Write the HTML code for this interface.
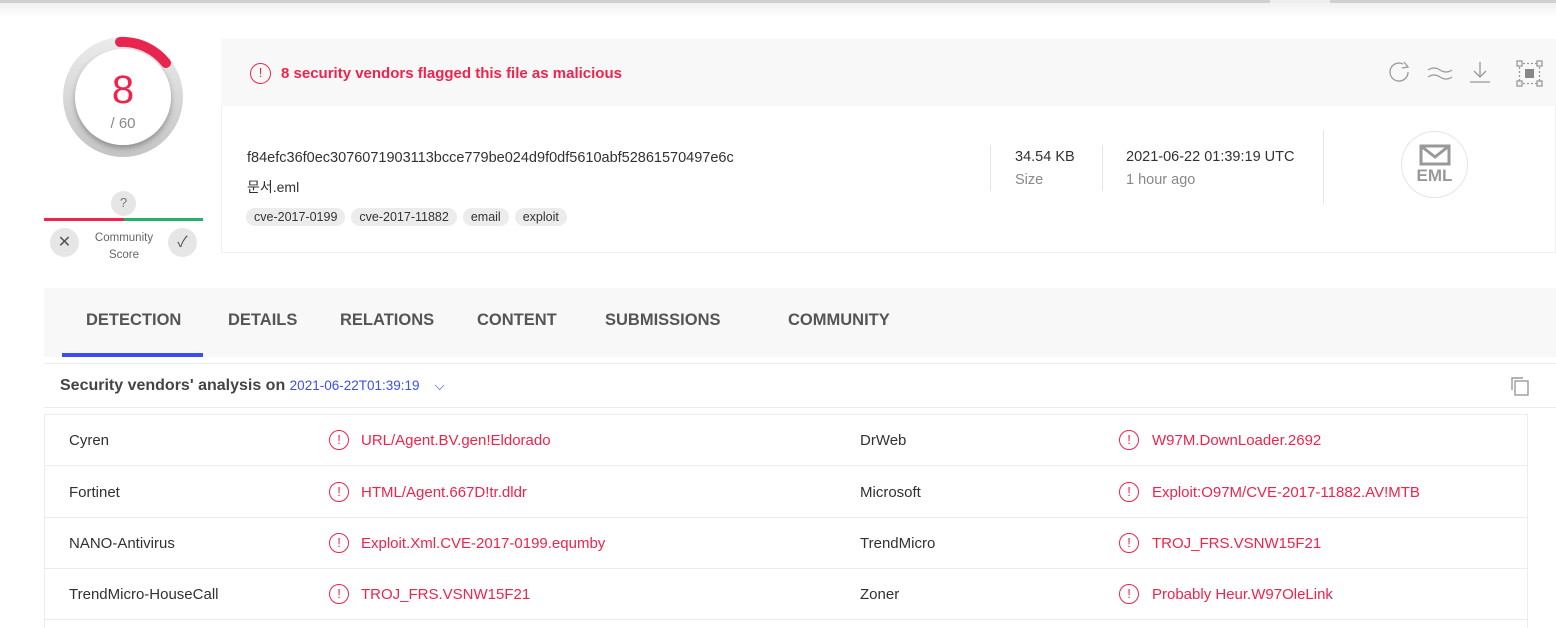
<!DOCTYPE html>
<html><head><meta charset="utf-8"><style>
*{box-sizing:border-box;margin:0;padding:0}
body{width:1556px;height:628px;overflow:hidden;background:#fff;font-family:"Liberation Sans","Noto Sans CJK KR",sans-serif;color:#313131;position:relative}
.abs{position:absolute}
.red{color:#f0234b}
.tag{display:inline-block;background:#ececec;border-radius:10px;padding:2px 8px;font-size:12.5px;color:#333;margin-right:6px}
.tab{position:absolute;top:311px;font-size:16.5px;font-weight:bold;color:#555}
.row{position:absolute;left:44px;width:1484px;height:52px;border-bottom:1px solid #ececec;font-size:15px}
.row span{position:absolute;top:18px}
.ic{width:20px;height:20px;border:1.5px solid #f0234b;border-radius:50%;color:#f0234b;font-size:13px;text-align:center;line-height:17px;top:16px!important}
</style></head><body>
<div class="abs" style="left:0;top:0;width:1556px;height:3px;background:#d0d0d0"></div>
<div class="abs" style="left:0;top:3px;width:1556px;height:14px;background:linear-gradient(#f0f0f0,#fff)"></div>
<div class="abs" style="left:1269px;top:0;width:62px;height:3px;border-left:1px solid #ccc;border-right:1px solid #ccc;background:#eee"></div>

<!-- gauge -->
<svg class="abs" style="left:53px;top:27px" width="140" height="140">
<defs><linearGradient id="g" x1="0" y1="0" x2="0" y2="1"><stop offset="0" stop-color="#ececec"/><stop offset="1" stop-color="#c4c4c4"/></linearGradient>
<filter id="s" x="-30%" y="-30%" width="160%" height="160%"><feDropShadow dx="0" dy="3" stdDeviation="3" flood-color="#000" flood-opacity=".3"/></filter></defs>
<circle cx="70" cy="70" r="60" fill="url(#g)"/>
<circle cx="70" cy="70" r="48" fill="#fff" filter="url(#s)"/>
<path d="M67 15 A55 55 0 0 1 113 36" stroke="#e8254e" stroke-width="10" fill="none" stroke-linecap="round"/>
</svg>
<div class="abs red" style="left:83px;top:68px;width:80px;text-align:center;font-size:40px">8</div>
<div class="abs" style="left:83px;top:115px;width:80px;text-align:center;font-size:15px;color:#888">/ 60</div>
<div class="abs" style="left:111px;top:191px;width:25px;height:25px;border-radius:50%;background:#e6e6e6;text-align:center;font-size:13px;line-height:24px;color:#777">?</div>
<div class="abs" style="left:44px;top:218px;width:80px;height:3px;background:#f0234b"></div>
<div class="abs" style="left:124px;top:218px;width:79px;height:3px;background:#25b06f"></div>
<div class="abs" style="left:50px;top:228px;width:29px;height:29px;border-radius:50%;background:#e6e6e6;text-align:center;line-height:29px;color:#555;font-size:16px">✕</div>
<div class="abs" style="left:168px;top:228px;width:29px;height:29px;border-radius:50%;background:#e6e6e6;text-align:center;line-height:29px;color:#555;font-size:15px">✓</div>
<div class="abs" style="left:84px;top:230px;width:80px;text-align:center;font-size:11.5px;color:#666;line-height:17px">Community<br>Score</div>

<!-- banner -->
<div class="abs" style="left:221px;top:39px;width:1335px;height:67px;background:#f8f8f8"></div>
<div class="abs ic" style="left:250px;top:63px!important;width:21px;height:21px;line-height:18px;position:absolute">!</div>
<div class="abs red" style="left:281px;top:65px;font-size:15px;font-weight:bold">8 security vendors flagged this file as malicious</div>
<svg class="abs" style="left:1386px;top:58px" width="160" height="32" fill="none" stroke="#999" stroke-width="1.3">
<path d="M22 14 A9 9 0 1 1 17 6" /><path d="M18 4 l4 5 l-6 1"/>
<path d="M42 12 q6 -4 12 0 t12 0 M42 19 q6 -4 12 0 t12 0"/>
<path d="M94 4 v15 M88 13 l6 6 l6 -6 M84 24 h20"/>
<rect x="131" y="3" width="5" height="5"/><rect x="151" y="3" width="5" height="5"/><rect x="131" y="23" width="5" height="5"/><rect x="151" y="23" width="5" height="5"/>
<rect x="139" y="11" width="9" height="9" fill="#888" stroke="none"/>
<path d="M137 5.5 h14 M137 25.5 h14 M133.5 9 v14 M153.5 9 v14" stroke-dasharray="2 2"/>
</svg>

<!-- info box -->
<div class="abs" style="left:221px;top:106px;width:1335px;height:147px;border:1px solid #f0f0f0;border-top:none"></div>
<div class="abs" style="left:247px;top:150px;font-size:14.5px">f84efc36f0ec3076071903113bcce779be024d9f0df5610abf52861570497e6c</div>
<div class="abs" style="left:247px;top:177px;font-size:14px">문서.eml</div>
<div class="abs" style="left:246px;top:208px"><span class="tag">cve-2017-0199</span><span class="tag">cve-2017-11882</span><span class="tag">email</span><span class="tag">exploit</span></div>
<div class="abs" style="left:990px;top:145px;width:1px;height:46px;background:#e5e5e5"></div>
<div class="abs" style="left:1015px;top:149px;font-size:14.5px">34.54 KB</div>
<div class="abs" style="left:1015px;top:172px;font-size:14.5px;color:#888">Size</div>
<div class="abs" style="left:1102px;top:145px;width:1px;height:46px;background:#e5e5e5"></div>
<div class="abs" style="left:1126px;top:149px;font-size:14.5px">2021-06-22 01:39:19 UTC</div>
<div class="abs" style="left:1126px;top:172px;font-size:14.5px;color:#888">1 hour ago</div>
<div class="abs" style="left:1323px;top:130px;width:1px;height:74px;background:#e5e5e5"></div>
<div class="abs" style="left:1401px;top:131px;width:67px;height:67px;border:1px solid #e5e5e5;border-radius:50%"></div>
<svg class="abs" style="left:1419px;top:144px" width="32" height="24" fill="none" stroke="#999" stroke-width="3"><rect x="2" y="2" width="28" height="18"/><path d="M2 2 l14 11 l14 -11"/></svg>
<div class="abs" style="left:1401px;top:166px;width:67px;text-align:center;font-weight:bold;font-size:17px;color:#999">EML</div>

<!-- tabs -->
<div class="abs" style="left:44px;top:288px;width:1512px;height:69px;background:#f8f8f8"></div>
<div class="tab" style="left:86px">DETECTION</div>
<div class="tab" style="left:228px">DETAILS</div>
<div class="tab" style="left:340px">RELATIONS</div>
<div class="tab" style="left:477px">CONTENT</div>
<div class="tab" style="left:605px">SUBMISSIONS</div>
<div class="tab" style="left:788px">COMMUNITY</div>
<div class="abs" style="left:62px;top:353px;width:141px;height:4px;background:#3c4ef0"></div>

<div class="abs" style="left:44px;top:363px;width:1512px;height:45px;border-top:1px solid #ececec;border-bottom:1px solid #ececec"></div>
<div class="abs" style="left:60px;top:377px;font-size:16px;font-weight:bold;color:#444">Security vendors' analysis on <span style="font-weight:normal;font-size:13.5px;color:#3c4ef0">2021-06-22T01:39:19 &nbsp;&nbsp;&nbsp;⌵</span></div>
<svg class="abs" style="left:1510px;top:376px" width="22" height="22" fill="none" stroke="#999" stroke-width="1.4"><path d="M2 14 V2 H13"/><rect x="5" y="5" width="13" height="14"/></svg>

<!-- table -->
<div class="abs" style="left:44px;top:414px;width:1484px;height:214px;border-left:1px solid #ececec;border-right:1px solid #ececec;border-top:1px solid #ececec"></div>
<div class="row" style="top:414px"><span style="left:25px">Cyren</span><span class="ic" style="left:285px">!</span><span class="red" style="left:317px">URL/Agent.BV.gen!Eldorado</span><span style="left:816px">DrWeb</span><span class="ic" style="left:1075px">!</span><span class="red" style="left:1108px">W97M.DownLoader.2692</span></div>
<div class="row" style="top:466px"><span style="left:25px">Fortinet</span><span class="ic" style="left:285px">!</span><span class="red" style="left:317px">HTML/Agent.667D!tr.dldr</span><span style="left:816px">Microsoft</span><span class="ic" style="left:1075px">!</span><span class="red" style="left:1108px">Exploit:O97M/CVE-2017-11882.AV!MTB</span></div>
<div class="row" style="top:517px"><span style="left:25px">NANO-Antivirus</span><span class="ic" style="left:285px">!</span><span class="red" style="left:317px">Exploit.Xml.CVE-2017-0199.equmby</span><span style="left:816px">TrendMicro</span><span class="ic" style="left:1075px">!</span><span class="red" style="left:1108px">TROJ_FRS.VSNW15F21</span></div>
<div class="row" style="top:568px"><span style="left:25px">TrendMicro-HouseCall</span><span class="ic" style="left:285px">!</span><span class="red" style="left:317px">TROJ_FRS.VSNW15F21</span><span style="left:816px">Zoner</span><span class="ic" style="left:1075px">!</span><span class="red" style="left:1108px">Probably Heur.W97OleLink</span></div>
</body></html>
